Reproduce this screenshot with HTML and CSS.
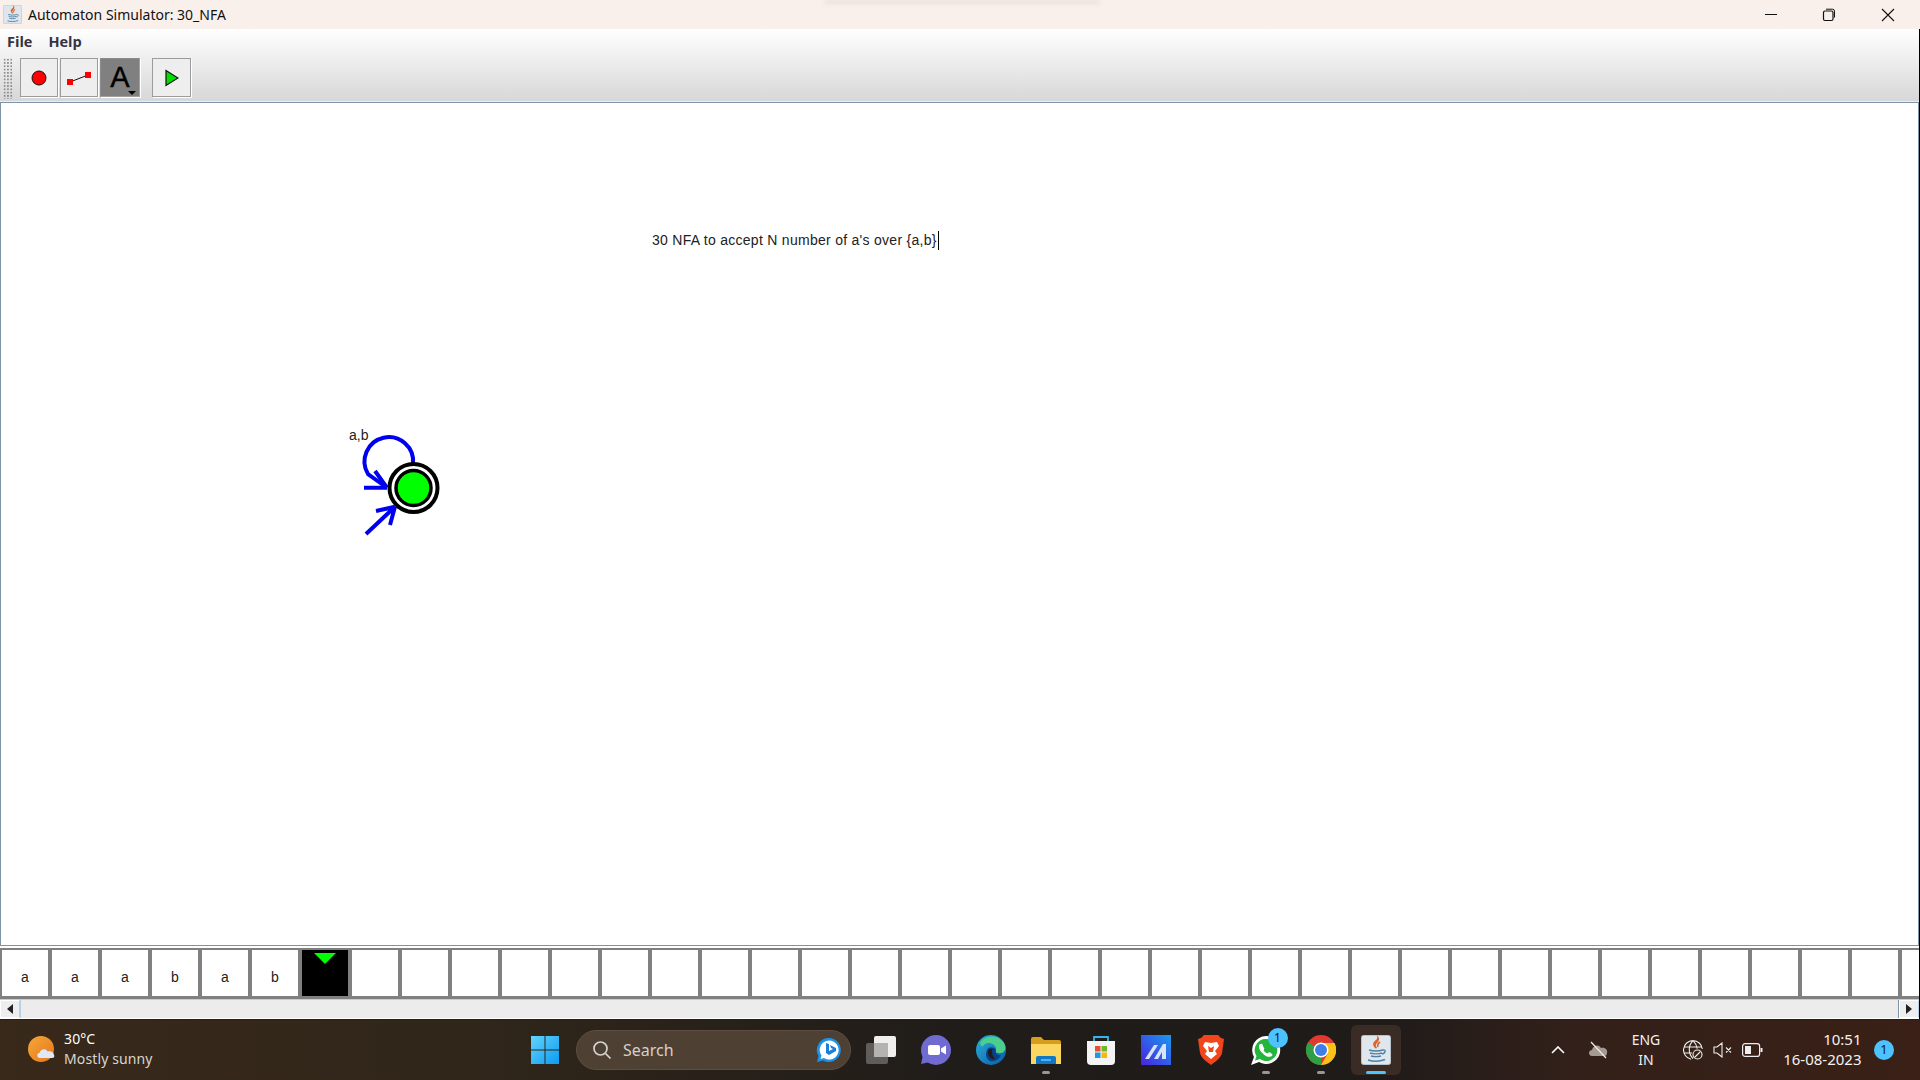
FILE: index.html
```html
<!DOCTYPE html>
<html lang="en">
<head>
<meta charset="utf-8">
<title>Automaton Simulator: 30_NFA</title>
<link rel="stylesheet" href="styles.css">
</head>
<body>
<svg class="defs" width="0" height="0" aria-hidden="true">
  <defs>
    <symbol id="java" viewBox="0 0 30 30">
      <rect x="0.5" y="0.5" width="29" height="29" rx="2" fill="#dfe6ec" stroke="#b7c3cd"/>
      <path d="M17 3c2 3-4 5-3 8 .4 1.200 1.500 2 1.500 2-1.500-1-3-2.500-2.500-4.500C13.500 6.500 17 5.500 17 3zM19 7c-2 1.500-3 3-2 5" fill="none" stroke="#d9652a" stroke-width="1.600"/>
      <path d="M8 15c4 1.200 10 1.200 14 0M9 18c3 1 9 1 12 0M10 21c3 .8 7 .8 10 0M7 25c5 1.500 12 1.500 17-.5M22 15c3-.5 3 3-1 4" fill="none" stroke="#4b7fa5" stroke-width="1.400"/>
    </symbol>
  </defs>
</svg>
<div class="app">
  <header class="titlebar">
    <svg class="title-icon"><use href="#java"/></svg>
    <span class="title-text">Automaton Simulator: 30_NFA</span>
    <div class="title-shadow"></div>
    <div class="win-controls">
      <div class="win-btn"><svg width="14" height="14" viewBox="0 0 14 14"><path d="M1 6.500h12" stroke="#111" fill="none"/></svg></div>
      <div class="win-btn"><svg width="14" height="14" viewBox="0 0 14 14"><rect x="1.500" y="3" width="9.500" height="9.500" rx="1.500" fill="none" stroke="#111" stroke-width="1.200"/><path d="M4 1.200h6.500a2 2 0 0 1 2 2V9.500" fill="none" stroke="#111"/></svg></div>
      <div class="win-btn"><svg width="14" height="14" viewBox="0 0 14 14"><path d="M1 1l12 12M13 1L1 13" stroke="#111" stroke-width="1.100" fill="none"/></svg></div>
    </div>
  </header>

  <div class="chrome">
    <nav class="menubar"><span class="menu-item">File</span><span class="menu-item">Help</span></nav>
    <div class="toolbar">
      <div class="gripper"></div>
      <div class="tool">
        <svg width="16" height="16" viewBox="0 0 16 16"><circle cx="8" cy="8" r="7" fill="#f00" stroke="#111"/></svg>
      </div>
      <div class="tool">
        <svg width="26" height="16" viewBox="0 0 26 16"><path d="M4 12L22 5" stroke="#111" fill="none"/><rect x="1" y="9" width="6" height="6" fill="#f00"/><rect x="19" y="2" width="6" height="6" fill="#f00"/></svg>
      </div>
      <div class="tool tool-active">
        <span class="tool-a">A</span>
        <i class="tool-caret"></i>
      </div>
      <div class="tool tool-play">
        <svg width="14" height="18" viewBox="0 0 14 18"><path d="M1 1.500L13 9 1 16.500z" fill="#00e000" stroke="#111" stroke-width="1.200"/></svg>
      </div>
    </div>
  </div>

  <main class="canvas">
    <p class="note">30 NFA to accept N number of a's over {a,b}<i class="caret"></i></p>
    <span class="state-label">a,b</span>
    <svg class="diagram" width="110" height="110" viewBox="0 0 110 110">
      <path d="M53 34A24.300 24.300 0 1 0 8 44L26 57" fill="none" stroke="#0000f0" stroke-width="4"/>
      <path d="M4 57.700H27M15 41L27 57.700" fill="none" stroke="#0000f0" stroke-width="4"/>
      <path d="M6 104L35 76.700M16 81L35 76.700M30 95L35 76.700" fill="none" stroke="#0000f0" stroke-width="4"/>
      <circle cx="53.500" cy="58" r="24" fill="#fff" stroke="#000" stroke-width="4"/>
      <circle cx="53.500" cy="58" r="17.500" fill="#00ff00" stroke="#000" stroke-width="3.500"/>
    </svg>
  </main>

  <section class="tape">
    <div class="cell">a</div><div class="cell">a</div><div class="cell">a</div><div class="cell">b</div><div class="cell">a</div><div class="cell">b</div>
    <div class="cell cell-head"><i class="head-mark"></i></div>
    <div class="cell"></div><div class="cell"></div><div class="cell"></div><div class="cell"></div><div class="cell"></div>
    <div class="cell"></div><div class="cell"></div><div class="cell"></div><div class="cell"></div><div class="cell"></div>
    <div class="cell"></div><div class="cell"></div><div class="cell"></div><div class="cell"></div><div class="cell"></div>
    <div class="cell"></div><div class="cell"></div><div class="cell"></div><div class="cell"></div><div class="cell"></div>
    <div class="cell"></div><div class="cell"></div><div class="cell"></div><div class="cell"></div><div class="cell"></div>
    <div class="cell"></div><div class="cell"></div><div class="cell"></div><div class="cell"></div><div class="cell"></div>
    <div class="cell"></div><div class="cell"></div>
  </section>

  <div class="hscroll">
    <div class="scroll-btn"><i class="arrow-left"></i></div>
    <div class="scroll-track"></div>
    <div class="scroll-btn"><i class="arrow-right"></i></div>
  </div>
</div>

<footer class="taskbar">
  <div class="weather">
    <svg class="weather-icon" width="28" height="28" viewBox="0 0 28 28">
      <defs><linearGradient id="sun" x1="0" y1="0" x2="1" y2="1"><stop offset="0" stop-color="#f3a93a"/><stop offset="1" stop-color="#e8751a"/></linearGradient></defs>
      <circle cx="13" cy="13" r="13" fill="url(#sun)"/>
      <path d="M12 22c-3.500 0-3.500-5-.5-5 1-4 6.500-5 8-1.500 3-1 6.500 1 6.500 3.500 1 1.500 0 3-2 3z" fill="#dfe8f6"/>
    </svg>
    <div class="weather-text"><span class="temp">30°C</span><span class="sky">Mostly sunny</span></div>
  </div>

  <div class="start">
    <svg width="30" height="30" viewBox="0 0 30 30">
      <defs><linearGradient id="win" x1="0" y1="0" x2="1" y2="1"><stop offset="0" stop-color="#63d3fb"/><stop offset="1" stop-color="#0c9bf3"/></linearGradient></defs>
      <path d="M1 1h13.500v13.500H1zM15.500 1H29v13.500H15.500zM1 15.500h13.500V29H1zM15.500 15.500H29V29H15.500z" fill="url(#win)"/>
    </svg>
  </div>

  <div class="search">
    <svg width="20" height="20" viewBox="0 0 20 20"><circle cx="8.500" cy="8.500" r="6.500" fill="none" stroke="#d8d4cf" stroke-width="1.700"/><path d="M13.500 13.500L18.500 18.500" stroke="#d8d4cf" stroke-width="1.700"/></svg>
    <span class="search-text">Search</span>
    <svg class="bing" width="26" height="26" viewBox="0 0 26 26">
      <path d="M13 1a12 12 0 1 1-6 22.500L1 25l1.500-6A12 12 0 0 1 13 1z" fill="#1a93e8"/>
      <path d="M13 3.500a9.500 9.500 0 1 1-5 17.500l-3.500 1 1-3.500A9.500 9.500 0 0 1 13 3.500z" fill="#fff"/>
      <path d="M10 6l3 1v7l4-2-2-1-1-3 6 3v3l-7 4-3-2z" fill="#1a7fd8"/>
    </svg>
  </div>

  <div class="apps">
    <div class="app-slot">
      <svg width="30" height="28" viewBox="0 0 30 28"><rect x="0" y="7" width="22" height="21" rx="2" fill="#5f5c59"/><rect x="8" y="0" width="22" height="21" rx="2" fill="#f0efee"/><rect x="8" y="7" width="14" height="14" fill="#b5b3b1"/></svg>
    </div>
    <div class="app-slot">
      <svg width="30" height="30" viewBox="0 0 30 30"><circle cx="15" cy="15" r="15" fill="#6f6bd0"/><path d="M2 20l-2 9 9-2z" fill="#6f6bd0"/><rect x="7" y="10" width="12" height="10" rx="2" fill="#fff"/><path d="M20 13.500l5-3v9l-5-3z" fill="#fff"/></svg>
    </div>
    <div class="app-slot">
      <svg width="30" height="30" viewBox="0 0 30 30">
        <defs><linearGradient id="edge" x1="0" y1="0" x2="1" y2="1"><stop offset="0" stop-color="#2ab0d8"/><stop offset="1" stop-color="#0b5aa8"/></linearGradient></defs>
        <circle cx="15" cy="15" r="15" fill="url(#edge)"/>
        <path d="M4 8C8 0 22-1 28 8c3 5 1 10-4 10-5 0-5-1-4-4 .5-5-9-9-13-3-1 .8-2 .5-3-3z" fill="#4ccf8c"/>
        <path d="M11 15c2-4 8-3 9 0-1 3 1 5 5 5-2 5-7 7-11 6-4-2-5-7-3-11z" fill="#0a3f86"/>
        <path d="M12 17c0-3 3-4 5-3-2 2-1 7 2 10-4 1-7-3-7-7z" fill="#1f1c1a"/>
      </svg>
    </div>
    <div class="app-slot">
      <svg width="30" height="28" viewBox="0 0 30 28"><path d="M0 3a2 2 0 0 1 2-2h8l3 3h15a2 2 0 0 1 2 2v4H0z" fill="#d79e1e"/><path d="M0 8h30v20H0z" fill="#fbd660"/><path d="M5 22a2 2 0 0 1 2-2h16a2 2 0 0 1 2 2v6H5z" fill="#1078c8"/><path d="M10 24h10" stroke="#6fc2f0" stroke-width="1.500"/></svg>
      <i class="run-dot"></i>
    </div>
    <div class="app-slot">
      <svg width="30" height="30" viewBox="0 0 30 30"><path d="M8 8V2h14v6" fill="none" stroke="#35b5e8" stroke-width="1.800"/><path d="M1 6h28v20a4 4 0 0 1-4 4H5a4 4 0 0 1-4-4z" fill="#f4f4f4"/><rect x="9" y="11" width="5.500" height="5.500" fill="#e8502a"/><rect x="15.500" y="11" width="5.500" height="5.500" fill="#6cb82c"/><rect x="9" y="17.500" width="5.500" height="5.500" fill="#1b9ae0"/><rect x="15.500" y="17.500" width="5.500" height="5.500" fill="#f6b80c"/></svg>
    </div>
    <div class="app-slot">
      <svg width="30" height="30" viewBox="0 0 30 30">
        <defs><linearGradient id="lin" x1="1" y1="0" x2="0" y2="1"><stop offset="0" stop-color="#1a9af0"/><stop offset="1" stop-color="#4a22e0"/></linearGradient></defs>
        <rect width="30" height="30" fill="url(#lin)"/>
        <path d="M4 24L13 10h4L8 24zM13 24l9-15h3v15h-4v-7l-4 7z" fill="#d6e4fb"/>
      </svg>
    </div>
    <div class="app-slot">
      <svg width="26" height="30" viewBox="0 0 26 30"><path d="M6 0h14l3 3 3 1-2 14c-1 5-7 9-11 12C9 27 3 23 2 18L0 4l3-1z" fill="#f1461c"/><path d="M13 8L7 7 5 11l4 5-2 3 6 5 6-5-2-3 4-5-2-4z" fill="#fff"/><path d="M10 11l3 2 3-2-1 6h-4z" fill="#f1461c"/></svg>
    </div>
    <div class="app-slot">
      <svg width="30" height="30" viewBox="0 0 30 30"><path d="M15 1a14 14 0 1 1-7 26L0 30l3-8A14 14 0 0 1 15 1z" fill="#fff"/><path d="M15 4a11 11 0 1 1-6 20l-5 1.500L5.500 21A11 11 0 0 1 15 4z" fill="#25b43c"/><path d="M10 9c2-1 2 3 3 4s-1 2 0 3 3 3 4 2 2-1 4 1-3 4-6 2-7-6-7-9 1-3 2-3z" fill="#fff"/></svg>
      <b class="count-badge">1</b>
      <i class="run-dot"></i>
    </div>
    <div class="app-slot">
      <svg width="30" height="30" viewBox="0 0 30 30"><circle cx="15" cy="15" r="15" fill="#e0392e"/><path d="M15 15L2 7.500A15 15 0 0 0 15 30z" fill="#2f9e44"/><path d="M15 8h13.500A15 15 0 0 1 15 30l6.500-11z" fill="#fbc116"/><circle cx="15" cy="15" r="7.500" fill="#fff"/><circle cx="15" cy="15" r="6" fill="#3f7ee8"/></svg>
      <i class="run-dot"></i>
    </div>
    <div class="app-slot app-active">
      <svg width="30" height="30"><use href="#java"/></svg>
      <i class="active-bar"></i>
    </div>
  </div>

  <div class="tray">
    <svg class="tray-chevron" width="14" height="8" viewBox="0 0 14 8"><path d="M1 7l6-6 6 6" fill="none" stroke="#fff" stroke-width="1.600"/></svg>
    <svg class="tray-cloud" width="20" height="18" viewBox="0 0 20 18"><path d="M4 15c-4 0-4-6 0-6 1-5 7-6 9-2 4-1 7 2 6 5 0 2-1 3-3 3z" fill="#a49a93"/><path d="M3 1l15 16" stroke="#efe9e4" stroke-width="1.200"/></svg>
    <div class="lang"><span>ENG</span><span>IN</span></div>
    <svg class="tray-globe" width="20" height="20" viewBox="0 0 20 20"><g fill="none" stroke="#eee" stroke-width="1.100"><path d="M10 .6a9.400 9.400 0 0 0-2 18.600M10 .6a9.400 9.400 0 0 1 9.300 8.400M10 .6c-5 5-5 13 0 18M10 .6c3 3 4 6 4.200 8M1 7h18M1 13h8"/><circle cx="14.500" cy="14.500" r="4.500"/><path d="M11.500 17.500l6-6"/></g></svg>
    <svg class="tray-speaker" width="20" height="16" viewBox="0 0 20 16"><path d="M1 5h3l5-4v14l-5-4H1zM13 5.500l5 5M18 5.500l-5 5" fill="none" stroke="#eee" stroke-width="1.100"/></svg>
    <svg class="tray-battery" width="21" height="14" viewBox="0 0 21 14"><rect x=".6" y=".6" width="17" height="12.800" rx="2.500" fill="none" stroke="#eee" stroke-width="1.200"/><rect x="3" y="3" width="6" height="8" fill="#eee"/><rect x="18.500" y="5" width="2" height="4" fill="#eee"/></svg>
    <div class="clock"><span>10:51</span><span>16-08-2023</span></div>
    <b class="notify">1</b>
  </div>
</footer>
</body>
</html>
```

FILE: styles.css
```css
* { box-sizing: border-box; }
html, body { margin: 0; padding: 0; width: 1920px; height: 1080px; overflow: hidden; }
body { display: flex; flex-direction: column; background: #fff; font-family: "Noto Sans", "Open Sans", sans-serif; }
.defs { position: absolute; }
i, b { display: block; font-style: normal; }

.app { flex: 1; min-height: 0; display: flex; flex-direction: column; border-right: 1px solid #000; }

.titlebar { position: relative; height: 29px; flex: none; display: flex; align-items: center; padding-left: 3px; background: #f9f0eb; margin-right: -1px; }
.title-icon { width: 19px; height: 19px; margin-right: 6px; }
.title-text { font-size: 14px; color: #111; }
.title-shadow { position: absolute; left: 825px; top: 0; width: 275px; height: 4px; background: #ecdfdb; filter: blur(2px); }
.win-controls { margin-left: auto; display: flex; }
.win-btn { width: 54px; height: 29px; display: flex; align-items: center; justify-content: center; }
.win-btn:first-child { width: 62px; }
.win-btn:last-child { width: 64px; }

.chrome { flex: none; height: 73px; background: linear-gradient(#fff, #d7d7d7); border-bottom: 1px solid #ededed; }
.menubar { height: 25px; display: flex; align-items: center; gap: 16px; padding-left: 7px; }
.menu-item { font-family: "Open Sans", sans-serif; font-size: 14.500px; font-weight: 700; color: #333344; }
.toolbar { display: flex; align-items: flex-start; padding: 4px 0 0 3px; }
.gripper { width: 10px; height: 41px; margin-right: 7px; background-image: radial-gradient(#8a8a8a 0.9px, transparent 1px); background-size: 3.300px 3.300px; }
.tool { position: relative; width: 38px; height: 39px; margin-right: 2px; display: flex; align-items: center; justify-content: center; background: #eeeeee; border: 1px solid #9b9b9b; box-shadow: 1px 1px 0 #fff; }
.tool-active { width: 40px; background: #808080; border-color: #8c8c8c #a0a0a0 #a0a0a0 #8c8c8c; }
.tool-play { margin-left: 10px; width: 39px; }
.tool-a { font-family: "Liberation Sans", sans-serif; font-size: 29px; line-height: 29px; color: #000; -webkit-text-stroke: 0.4px #000; }
.tool-caret { position: absolute; right: 3px; bottom: 1px; width: 0; height: 0; border-left: 4px solid transparent; border-right: 4px solid transparent; border-top: 4px solid #000; }

.canvas { position: relative; flex: 1; min-height: 0; margin-bottom: 2px; background: #fff; border: 1px solid #7d93a8; overflow: hidden; }
.note { position: absolute; left: 651px; top: 127px; margin: 0; font-family: "Liberation Sans", sans-serif; font-size: 14px; line-height: 20px; letter-spacing: 0.28px; color: #222; white-space: nowrap; }
.caret { display: inline-block; width: 1px; height: 19px; margin-left: 1px; background: #000; vertical-align: -5px; }
.state-label { position: absolute; left: 348px; top: 324px; font-family: "Liberation Sans", sans-serif; font-size: 14px; line-height: 16px; color: #222; }
.diagram { position: absolute; left: 359px; top: 327px; overflow: visible; }

.tape { flex: none; height: 51px; display: flex; gap: 4px; padding: 2px 0 3px 2px; background: #808080; overflow: hidden; }
.cell { flex: none; position: relative; width: 46px; height: 46px; padding-top: 17px; background: #fff; text-align: center; font-family: "Liberation Sans", sans-serif; font-size: 14px; line-height: 20px; color: #222; }
.cell-head { background: #000; }
.head-mark { position: absolute; left: 12px; top: 3px; width: 0; height: 0; border-left: 11px solid transparent; border-right: 11px solid transparent; border-top: 11px solid #00ff00; }

.hscroll { flex: none; height: 20px; display: flex; background: #eee; border-top: 1px solid #b8cfe5; border-bottom: 1px solid #fff; }
.scroll-btn { flex: none; width: 20px; display: flex; align-items: center; justify-content: center; background: #eeeeee; border: 1px solid #fff; border-right-color: #b8cfe5; }
.scroll-track { flex: 1; background: #ececec; border-left: 1px solid #b8cfe5; border-right: 1px solid #7d93a8; }
.arrow-left { width: 0; height: 0; border-top: 5px solid transparent; border-bottom: 5px solid transparent; border-right: 6px solid #222; }
.arrow-right { width: 0; height: 0; border-top: 5px solid transparent; border-bottom: 5px solid transparent; border-left: 6px solid #222; }

.taskbar { flex: none; height: 61px; display: flex; align-items: center; color: #fff; background: linear-gradient(90deg, #38291a 0%, #30261a 25%, #201c19 50%, #1f1b19 72%, #33201a 82%, #3a2016 100%); border-top: 1px solid #24211f; }
.weather { width: 520px; flex: none; display: flex; align-items: center; padding-left: 28px; }
.weather-icon { overflow: visible; }
.weather-text { display: flex; flex-direction: column; margin: -2px 0 0 8px; font-size: 14px; line-height: 20px; letter-spacing: 0.12px; }
.temp { color: #fff; }
.sky { color: #d9d5cf; }
.start { width: 50px; flex: none; display: flex; justify-content: center; }
.search { flex: none; width: 275px; height: 40px; margin-left: 6px; display: flex; align-items: center; padding-left: 15px; background: #4f4034; border-radius: 20px; border: 1px solid #5c4e43; }
.search-text { margin-left: 11px; font-size: 16px; color: #d5d0ca; }
.bing { margin-left: auto; margin-right: 8px; }
.apps { display: flex; margin-left: 2.500px; }
.app-slot { position: relative; width: 55px; height: 50px; flex: none; display: flex; align-items: center; justify-content: center; }
.app-active { width: 50px; margin-left: 2.500px; background: #3a2c25; border-radius: 6px; }
.run-dot { position: absolute; left: 50%; bottom: 1px; width: 8px; height: 3px; margin-left: -4px; border-radius: 2px; background: #9b9692; }
.active-bar { position: absolute; left: 15px; bottom: 1px; width: 20px; height: 3px; border-radius: 2px; background: #4cc2ff; }
.count-badge { position: absolute; left: 29px; top: 3px; width: 20px; height: 20px; border-radius: 50%; background: #4cc2ff; color: #111; font-size: 12px; font-weight: 400; line-height: 20px; text-align: center; }
.tray { position: relative; flex: 1; display: flex; align-items: center; height: 100%; padding-left: 147px; }
.tray-chevron { margin-left: 3px; }
.tray-cloud { margin-left: 23px; }
.lang { display: flex; flex-direction: column; align-items: center; width: 40px; margin-left: 18px; font-size: 14px; line-height: 20px; color: #f1f1f1; }
.tray-globe { margin-left: 17px; }
.tray-speaker { margin-left: 10px; }
.tray-battery { margin-left: 9px; }
.clock { display: flex; flex-direction: column; align-items: flex-end; width: 85px; margin: -2px 0 0 13.500px; font-size: 15px; line-height: 20px; color: #f5f1ee; }
.notify { width: 20px; height: 20px; margin-left: 12.500px; border-radius: 50%; background: #4cc2ff; color: #111; font-size: 12px; font-weight: 400; line-height: 20px; text-align: center; }
```
